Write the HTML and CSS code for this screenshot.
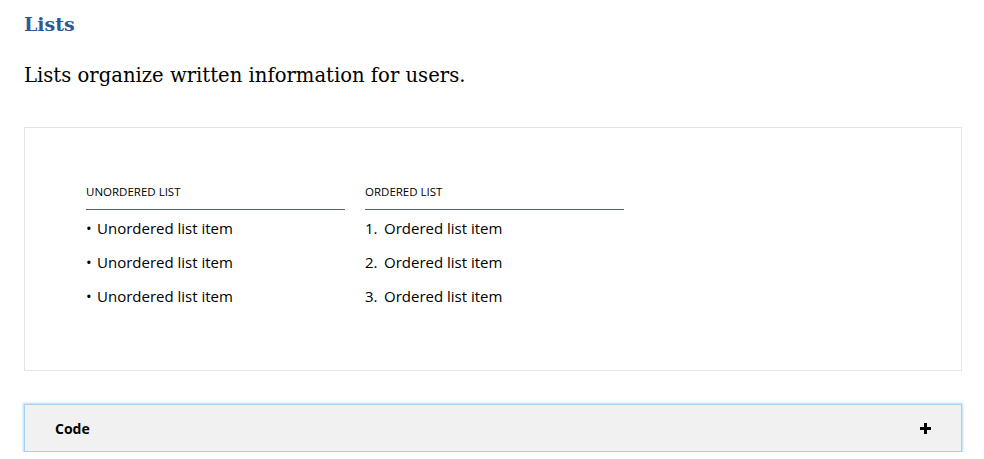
FILE: index.html
```html
<!DOCTYPE html>
<html lang="en">
<head>
<meta charset="utf-8">
<title>Lists</title>
<link rel="stylesheet" href="styles.css">
</head>
<body>
<main class="page">
  <h2 class="title">Lists</h2>
  <p class="lead">Lists organize written information for users.</p>
  <section class="preview">
    <div class="columns">
      <div class="col">
        <h3 class="col-head">Unordered list</h3>
        <ul class="list">
          <li>Unordered list item</li>
          <li>Unordered list item</li>
          <li>Unordered list item</li>
        </ul>
      </div>
      <div class="col">
        <h3 class="col-head">Ordered list</h3>
        <ol class="list ordered">
          <li>Ordered list item</li>
          <li>Ordered list item</li>
          <li>Ordered list item</li>
        </ol>
      </div>
    </div>
  </section>
  <button class="accordion" type="button">
    <span class="acc-label">Code</span>
    <svg class="acc-icon" width="13" height="13" viewBox="0 0 13 13" aria-hidden="true"><path d="M6.5 1v11M1 6.5h11" stroke="#000" stroke-width="3"/></svg>
  </button>
</main>
</body>
</html>
```

FILE: styles.css
```css
* { box-sizing: border-box; }
html, body { margin: 0; padding: 0; background: #fff; }
body { font-family: "Open Sans", "Noto Sans", sans-serif; color: #000; }
.page { padding: 0 22px 0 24px; }
.title {
  font-family: "DejaVu Serif", serif;
  font-weight: bold;
  font-size: 19px;
  line-height: 24px;
  color: #2b5a95;
  margin: 0;
  padding-top: 12px;
}
.lead {
  font-family: "DejaVu Serif", serif;
  font-size: 19.6px;
  line-height: 28px;
  margin: 26px 0 0;
}
.preview {
  margin-top: 37px;
  border: 1px solid #e4e4e4;
  height: 244px;
  padding: 57px 61px 0;
}
.columns { display: flex; gap: 20px; }
.col { width: 259px; }
.col-head {
  margin: 0;
  font-size: 11.5px;
  font-weight: normal;
  text-transform: uppercase;
  line-height: 14px;
  padding-bottom: 10px;
  border-bottom: 1px solid #5b616b;
}
.list {
  list-style: none;
  margin: 0;
  padding: 0;
  font-size: 15px;
  line-height: 20px;
}
.list li { margin-top: 14px; display: flex; }
.list li:first-child { margin-top: 8px; }
.list li::before { content: "•"; width: 11px; flex: none; font-size: 15px; }
.ordered { counter-reset: n; }
.ordered li { counter-increment: n; }
.ordered li::before { content: counter(n) "."; width: 19px; font-size: 15px; }
.accordion {
  display: flex;
  justify-content: space-between;
  align-items: center;
  width: 100%;
  height: 48px;
  margin-top: 33px;
  padding: 0 29px 0 30px;
  background: #f1f1f1;
  border: 1px solid #a8cfee;
  box-shadow: 0 0 2px 1px #b9dbf6;
  font-family: "Open Sans", sans-serif;
  color: #000;
  cursor: pointer;
}
.acc-label { font-size: 14px; font-weight: bold; }
.acc-icon { display: block; }
```
